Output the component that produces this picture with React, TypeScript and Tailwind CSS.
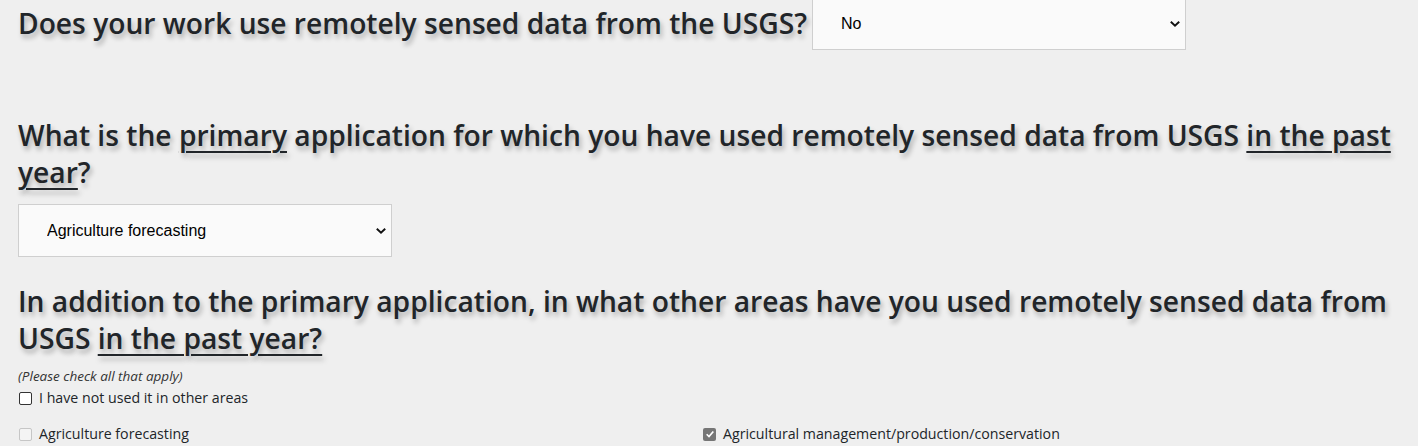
import React from "react";

const heading =
  "font-['Open_Sans',sans-serif] font-semibold text-[28.2px] leading-[37px] text-[#212529] [text-shadow:2px_4px_5px_rgba(0,0,0,0.28)]";

function Chevron() {
  return (
    <svg
      viewBox="0 0 12 8"
      className="pointer-events-none absolute right-[5px] top-1/2 h-[7px] w-[12px] -translate-y-1/2"
    >
      <path d="M1.2 1.4 6 6 10.8 1.4" fill="none" stroke="#111" strokeWidth="2.2" />
    </svg>
  );
}

function Select({ value, options }: { value: string; options: string[] }) {
  return (
    <div className="relative w-[374px] shrink-0">
      <select
        defaultValue={value}
        className="h-[53px] w-full appearance-none border border-[#cfcfcf] bg-[#fafafa] pl-[28px] pr-8 font-['Liberation_Sans',Arial,sans-serif] text-[16px] text-black outline-none"
      >
        {options.map((o) => (
          <option key={o}>{o}</option>
        ))}
      </select>
      <Chevron />
    </div>
  );
}

function Box({ checked, disabled }: { checked?: boolean; disabled?: boolean }) {
  if (checked) {
    return (
      <span className="ml-[1px] flex h-[13px] w-[13px] shrink-0 items-center justify-center rounded-[2px] bg-[#767676]">
        <svg viewBox="0 0 12 12" className="h-[10px] w-[10px]">
          <path d="M2 6.3 4.8 9 10 3" fill="none" stroke="#fff" strokeWidth="2" />
        </svg>
      </span>
    );
  }
  return (
    <span
      className={
        disabled
          ? "ml-[1px] h-[13px] w-[13px] shrink-0 rounded-[2px] border border-[#c6c6c6] bg-[#f4f4f4]"
          : "ml-[1px] h-[13px] w-[13px] shrink-0 rounded-[2px] border border-[#333] bg-white"
      }
    />
  );
}

function Check({ label, checked, disabled }: { label: string; checked?: boolean; disabled?: boolean }) {
  return (
    <label className="flex items-center gap-[7px] text-[14.2px] leading-[20px] text-[#212529]">
      <Box checked={checked} disabled={disabled} />
      <span>{label}</span>
    </label>
  );
}

export default function App() {
  return (
    <div className="h-[446px] overflow-hidden bg-[#efefef] px-[18px]">
      <div className="-mt-[3px] flex items-center gap-[5px]">
        <h2 className={heading + " whitespace-nowrap"}>
          Does your work use remotely sensed data from the USGS?
        </h2>
        <Select value="No" options={["No", "Yes"]} />
      </div>

      <h2 className={heading + " mt-[67px]"}>
        What is the <span className="underline decoration-2 underline-offset-[5px]">primary</span> application
        for which you have used remotely sensed data from USGS{" "}
        <span className="underline decoration-2 underline-offset-[5px]">in the past</span>
        <br />
        <span className="underline decoration-2 underline-offset-[5px]">year</span>?
      </h2>

      <div className="mt-[13px]">
        <Select
          value="Agriculture forecasting"
          options={["Agriculture forecasting", "Agricultural management/production/conservation"]}
        />
      </div>

      <h2 className={heading + " mt-[26px]"}>
        In addition to the primary application, in what other areas have you used remotely sensed data from
        <br />
        USGS <span className="underline decoration-2 underline-offset-[5px]">in the past year?</span>
      </h2>

      <div className="font-['Open_Sans',sans-serif]">
        <p className="mt-[10px] text-[13.5px] italic leading-[18px] text-[#333]">(Please check all that apply)</p>
        <div className="mt-[3px]">
          <Check label="I have not used it in other areas" />
        </div>
        <div className="mt-[16px] grid grid-cols-[684px_1fr]">
          <Check label="Agriculture forecasting" disabled />
          <Check label="Agricultural management/production/conservation" checked disabled />
        </div>
      </div>
    </div>
  );
}
